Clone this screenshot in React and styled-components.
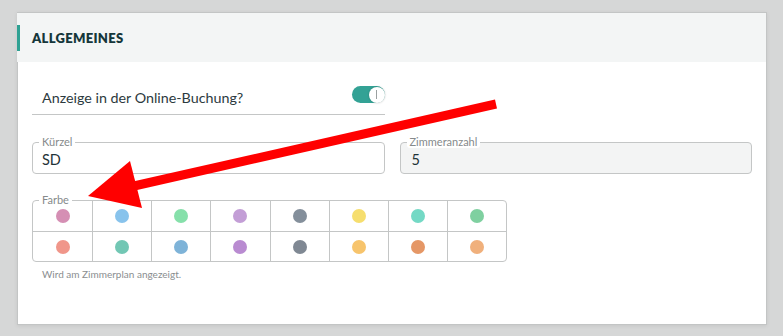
import React from "react";
import styled, { createGlobalStyle } from "styled-components";

const Global = createGlobalStyle`
  html, body { margin: 0; padding: 0; }
  body {
    background: #d6d7d7;
    font-family: Lato, "Open Sans", Arial, sans-serif;
    color: #2c3a3e;
  }
`;

const Page = styled.div`
  position: relative;
  width: 783px;
  height: 336px;
  padding: 12px 16px 0 17px;
  box-sizing: border-box;
`;

const Card = styled.section`
  width: 750px;
  height: 313px;
  box-sizing: border-box;
  background: #fff;
  border: 1px solid #c3c5c5;
  box-shadow: 0 1px 4px rgba(0, 0, 0, 0.08);
  display: flex;
  flex-direction: column;
`;

const Header = styled.header`
  height: 49px;
  background: #f3f5f5;
  display: flex;
  align-items: center;
  margin-left: -1px;
`;

const Title = styled.h2`
  margin: 0;
  height: 26px;
  display: flex;
  align-items: center;
  border-left: 3px solid #2fa193;
  padding-left: 12px;
  font-size: 13px;
  font-weight: 800;
  letter-spacing: 0.3px;
  color: #15363a;
`;

const Body = styled.div`
  padding: 18px 14px 0 14px;
  display: flex;
  flex-direction: column;
`;

const Grid2 = styled.div`
  display: grid;
  grid-template-columns: 1fr 1fr;
  column-gap: 15px;
  margin-top: ${(p) => p.$mt || 0}px;
`;

const ToggleRow = styled.div`
  height: 33px;
  border-bottom: 1px solid #c4c6c6;
  display: flex;
  align-items: center;
  justify-content: space-between;
  padding: 1px 0 0 10px;
  font-size: 14.3px;
  color: #2c3a3e;
`;

const Switch = styled.span`
  width: 33px;
  height: 17px;
  border-radius: 9px;
  background: #33a295;
  margin-top: -6px;
  display: flex;
  justify-content: flex-end;
  align-items: center;
`;

const Knob = styled.span`
  width: 16px;
  height: 16px;
  border-radius: 50%;
  background: #fff;
  box-shadow: 0 0 2px rgba(0, 0, 0, 0.25);
  display: flex;
  align-items: center;
  justify-content: center;
  &::after {
    content: "";
    width: 1px;
    height: 9px;
    background: #9aa0a0;
  }
`;

const Field = styled.div`
  position: relative;
  height: 32px;
  box-sizing: border-box;
  border: 1px solid #c4c6c6;
  border-radius: 4px;
  background: ${(p) => (p.$disabled ? "#f3f4f4" : "#fff")};
  display: flex;
  align-items: center;
  padding: 3px 0 0 ${(p) => (p.$disabled ? "11px" : "9px")};
  font-size: 14.5px;
  color: #1f3338;
`;

const FloatLabel = styled.span`
  position: absolute;
  top: -7px;
  left: 6px;
  padding: 0 3px;
  background: #fff;
  border-radius: 3px;
  font-size: 11px;
  line-height: 12px;
  color: #858a8b;
`;

const ColorBox = styled.div`
  position: relative;
  margin-top: 26px;
  width: 475px;
  box-sizing: border-box;
  border: 1px solid #c4c6c6;
  border-radius: 4px;
  display: grid;
  grid-template-columns: repeat(8, 1fr);
  grid-auto-rows: 30px;
`;

const Cell = styled.div`
  display: flex;
  align-items: center;
  justify-content: center;
  border-left: ${(p) => (p.$first ? "none" : "1px solid #c4c6c6")};
  border-top: ${(p) => (p.$top ? "none" : "1px solid #c4c6c6")};
`;

const Dot = styled.span`
  width: 14px;
  height: 14px;
  border-radius: 50%;
  background: ${(p) => p.$c};
`;

const Helper = styled.div`
  margin-top: 6px;
  padding-left: 10px;
  font-size: 10px;
  color: #8a8e8f;
`;

const Arrow = styled.svg`
  position: absolute;
  left: 0;
  top: 0;
  pointer-events: none;
`;

const colors = [
  "#d58fb4", "#88c3ec", "#86e0aa", "#c39ed6", "#848f9b", "#f6de6e", "#74d9c5", "#7fd0a0",
  "#f0968a", "#72c7b4", "#7eb3d8", "#b98bd1", "#7f8893", "#f7c46c", "#e59766", "#f0b07c",
];

export default function App() {
  return (
    <>
      <Global />
      <Page>
        <Card>
          <Header>
            <Title>ALLGEMEINES</Title>
          </Header>
          <Body>
            <Grid2>
              <ToggleRow>
                <span>Anzeige in der Online-Buchung?</span>
                <Switch>
                  <Knob />
                </Switch>
              </ToggleRow>
              <div />
            </Grid2>
            <Grid2 $mt={27}>
              <Field>
                <FloatLabel>Kürzel</FloatLabel>
                SD
              </Field>
              <Field $disabled>
                <FloatLabel>Zimmeranzahl</FloatLabel>
                5
              </Field>
            </Grid2>
            <ColorBox>
              <FloatLabel>Farbe</FloatLabel>
              {colors.map((c, i) => (
                <Cell key={i} $first={i % 8 === 0} $top={i < 8}>
                  <Dot $c={c} />
                </Cell>
              ))}
            </ColorBox>
            <Helper>Wird am Zimmerplan angezeigt.</Helper>
          </Body>
        </Card>
        <Arrow width="783" height="336" viewBox="0 0 783 336">
          <line x1="496" y1="104" x2="134" y2="186" stroke="#ff0000" strokeWidth="9" />
          <polygon points="88,196 130,161 142,208" fill="#ff0000" />
        </Arrow>
      </Page>
    </>
  );
}
